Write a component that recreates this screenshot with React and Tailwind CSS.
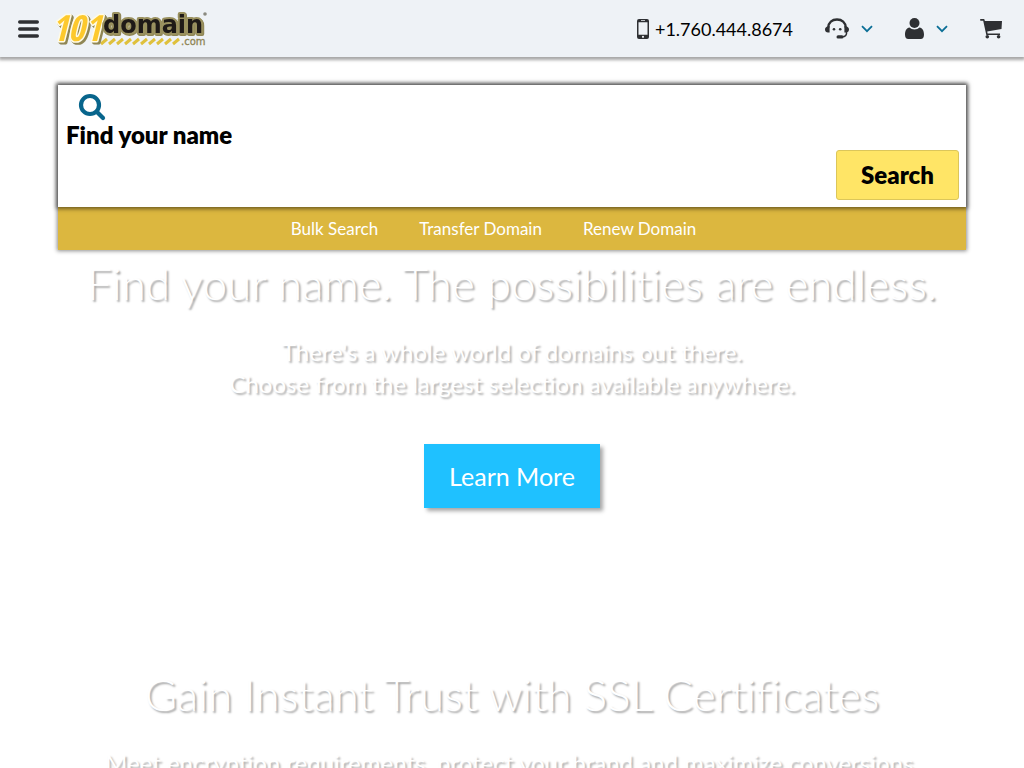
import React from "react";

function Logo() {
  return (
    <svg width="152" height="38" viewBox="0 0 152 38" className="overflow-visible" role="img" aria-label="101domain.com">
      <path
        stroke="#dfc13c"
        strokeWidth="3"
        d="M45 34l6-5M53 34l6-5M61 34l6-5M69 34l6-5M77 34l6-5M85 34l6-5M93 34l6-5M101 34l6-5M109 34l6-5M117 34l6-5"
      />
      <g className="[filter:drop-shadow(1px_1px_0_#8f8655)_drop-shadow(1px_1px_0_#8f8655)]">
        <text
          x="-5"
          y="31"
          fontFamily="'Open Sans Condensed', 'Liberation Sans', sans-serif"
          fontWeight="700"
          fontStyle="italic"
          fontSize="36"
          strokeLinejoin="round"
          fill="#fdc92d"
          stroke="#fffbe6"
          strokeWidth="3"
          className="[paint-order:stroke]"
        >
          101
        </text>
      </g>
      <g className="[filter:drop-shadow(1px_1px_0_#8f8655)]">
        <text
          x="47"
          y="23"
          fontFamily="'DejaVu Sans', sans-serif"
          fontWeight="700"
          fontSize="24"
          strokeLinejoin="round"
          fill="#1f1a17"
          stroke="#9a915f"
          strokeWidth="4"
          className="[paint-order:stroke]"
        >
          domain
        </text>
      </g>
      <text x="125" y="35" fontFamily="'DejaVu Sans', sans-serif" fontSize="10" fill="#8f8655" stroke="#8f8655" strokeWidth="0.300">
        .com
      </text>
      <circle cx="149" cy="4" r="1.800" fill="#8a8a80" />
    </svg>
  );
}

function Chevron() {
  return (
    <svg width="12" height="8" viewBox="0 0 12 8" fill="none" stroke="#0b6f96" strokeWidth="1.8" aria-hidden="true">
      <path d="M1 1.2l5 5 5-5" />
    </svg>
  );
}

function Header() {
  return (
    <header className="relative flex h-[57px] items-center bg-[#eef2f6] px-[18px] shadow-[0_2px_3px_1px_rgba(0,0,0,0.35)]">
      <button type="button" aria-label="Menu">
        <svg width="21" height="18" viewBox="0 0 21 18" stroke="#2e3033" strokeWidth="3.400" strokeLinecap="round">
          <path d="M1.700 2h17.600M1.700 9h17.600M1.700 16h17.600" />
        </svg>
      </button>
      <a href="#home" className="ml-[17px]">
        <Logo />
      </a>
      <div className="ml-auto flex items-center text-[#2e3033]">
        <a href="tel:+17604448674" className="flex items-center gap-1.5 text-lg text-black">
          <svg width="12" height="20" viewBox="0 0 12 20" fill="#2e3033" aria-hidden="true">
            <path
              fillRule="evenodd"
              d="M2 0h8a2 2 0 0 1 2 2v16a2 2 0 0 1-2 2H2a2 2 0 0 1-2-2V2a2 2 0 0 1 2-2zM1.500 3.200v12.600h9V3.200zM4 1.200v.8h4v-.8zM6 16.700a1.100 1.100 0 1 0 0 2.200 1.100 1.100 0 0 0 0-2.200z"
            />
          </svg>
          +1.760.444.8674
        </a>
        <button type="button" aria-label="Support" className="ml-8 flex items-center gap-3">
          <svg width="24" height="22" viewBox="0 0 24 22" aria-hidden="true">
            <g fill="none" stroke="#2e3033" strokeLinecap="round">
              <path d="M3.200 9.500C3.600 4.500 7 1.500 12 1.500S20.400 4.500 20.800 9.500" strokeWidth="2.400" />
              <path d="M21.500 13.500c.5 3.500-1 5.200-4.500 5.300" strokeWidth="1.500" />
            </g>
            <g fill="#2e3033">
              <path d="M4.600 8v6.500H3C1.300 14.500 0 13.200 0 11.500c0-1.600 1.200-2.900 2.800-3zM19.400 8v6.500H21c1.700 0 3-1.300 3-3 0-1.600-1.200-2.900-2.800-3z" />
              <circle cx="9" cy="11.300" r="1.300" />
              <circle cx="15.200" cy="11.300" r="1.300" />
              <rect x="11.500" y="17.300" width="7" height="3.200" rx="1.600" />
            </g>
          </svg>
          <Chevron />
        </button>
        <button type="button" aria-label="Account" className="ml-8 flex items-center gap-3">
          <svg width="19" height="21" viewBox="0 0 19 21" fill="#2e3033" aria-hidden="true">
            <circle cx="9.500" cy="5" r="5" />
            <path d="M4.500 9.400c1.300 1.300 3 2 5 2s3.700-.7 5-2c3 .4 4.500 3.300 4.500 7.300 0 2.800-1.200 4.300-3.300 4.300H3.300C1.200 21 0 19.500 0 16.700c0-4 1.500-6.900 4.500-7.300z" />
          </svg>
          <Chevron />
        </button>
        <a href="#cart" aria-label="Cart" className="ml-8 mr-1">
          <svg width="22" height="20" viewBox="0 0 22 20" fill="#2e3033" aria-hidden="true">
            <path d="M0 .8C0 .3.400 0 .800 0h3.400l.7 2H22l-.5 8-14.300 2.500.4 2H20v1.500H6.300L3.200 1.700H.8C.4 1.700 0 1.300 0 .8z" />
            <circle cx="7.300" cy="17.800" r="1.800" />
            <circle cx="18.600" cy="17.800" r="1.800" />
          </svg>
        </a>
      </div>
    </header>
  );
}

function SearchPanel() {
  return (
    <section className="mx-[58px] mt-7 shadow-[0_0_4px_1px_rgba(0,0,0,0.45)]">
      <form
        className="relative flex flex-col bg-white pb-[7px] pl-2 pr-[7px] pt-2 shadow-[0_0_4px_2px_rgba(0,0,0,0.5)]"
        onSubmit={(e) => e.preventDefault()}
      >
        <label htmlFor="domain" className="ml-3 w-7">
          <svg width="28" height="28" viewBox="0 0 28 28" fill="none" stroke="#08658c" role="img" aria-label="Find your name">
            <circle cx="12" cy="12" r="9" strokeWidth="4.200" />
            <path d="M19 19l6 6" strokeWidth="4.200" strokeLinecap="round" />
          </svg>
        </label>
        <input
          id="domain"
          type="text"
          placeholder="Find your name"
          className="mb-[1px] h-7 w-full text-2xl font-extrabold leading-7 text-black outline-none placeholder:text-black placeholder:opacity-100"
        />
        <button
          type="submit"
          className="h-[50px] w-[123px] self-end rounded-[3px] border border-[#dcc65a] bg-[#ffe566] text-2xl font-extrabold text-black"
        >
          Search
        </button>
      </form>
      <nav className="flex h-[43px] items-center justify-center gap-[41px] bg-[#dcb73f] pr-[37px] text-[17px] text-white">
        <a href="#bulk">Bulk Search</a>
        <a href="#transfer">Transfer Domain</a>
        <a href="#renew">Renew Domain</a>
      </nav>
    </section>
  );
}

const heading =
  "text-[44px] font-light leading-[60px] [font-variant-ligatures:none] [text-shadow:2px_2px_2px_rgba(0,0,0,0.35)]";
const lead = "text-2xl leading-8 [font-variant-ligatures:none] [text-shadow:2px_2px_2px_rgba(0,0,0,0.3)]";

export default function App() {
  return (
    <div className="h-screen overflow-hidden bg-white font-['Lato',sans-serif]">
      <Header />
      <main>
        <SearchPanel />
        <section className="flex flex-col items-center px-4 pt-[3px] text-center text-white">
          <h1 className={heading}>Find your name. The possibilities are endless.</h1>
          <p className={`mt-[23px] ${lead}`}>
            There's a whole world of domains out there.
            <br />
            Choose from the largest selection available anywhere.
          </p>
          <a href="#learn" className="mt-11 bg-[#1fc1ff] px-[25px] py-4 text-[25px] leading-8 shadow-[3px_3px_4px_rgba(0,0,0,0.35)]">
            Learn More
          </a>
        </section>
        <section className="mt-[156px] px-4 text-center text-white">
          <h2 className={heading}>Gain Instant Trust with SSL Certificates</h2>
          <p className={`mt-[23px] ${lead}`}>Meet encryption requirements, protect your brand and maximize conversions.</p>
        </section>
      </main>
    </div>
  );
}
